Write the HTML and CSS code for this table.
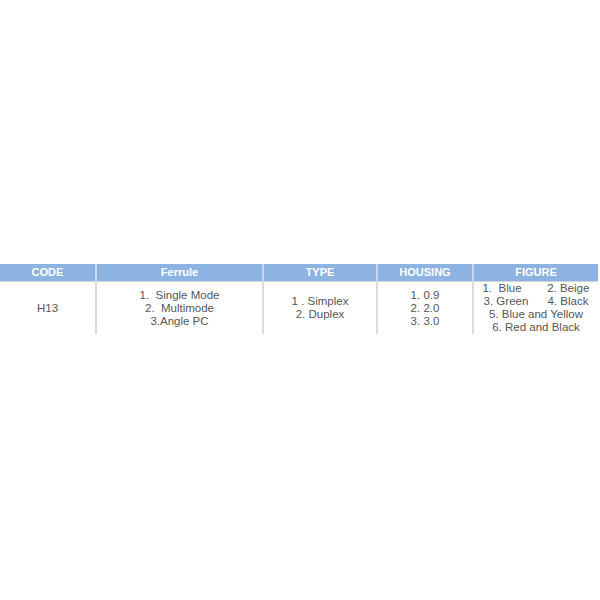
FILE: index.html
```
<!DOCTYPE html>
<html>
<head>
<meta charset="utf-8">
<link rel="stylesheet" href="styles.css">
</head>
<body>
<div class="page">
<table class="spec">
  <colgroup>
    <col class="c1"><col class="c2"><col class="c3"><col class="c4"><col class="c5">
  </colgroup>
  <thead>
    <tr><th>CODE</th><th>Ferrule</th><th>TYPE</th><th>HOUSING</th><th>FIGURE</th></tr>
  </thead>
  <tbody>
    <tr>
      <td>H13</td>
      <td><div class="l">1.  Single Mode</div><div class="l">2.  Multimode</div><div class="l">3.Angle PC</div></td>
      <td><div class="l">1 . Simplex</div><div class="l">2. Duplex</div></td>
      <td><div class="l">1. 0.9</div><div class="l">2. 2.0</div><div class="l">3. 3.0</div></td>
      <td><div class="l">1.  Blue        2. Beige</div><div class="l">3. Green      4. Black</div><div class="l">5. Blue and Yellow</div><div class="l">6. Red and Black</div></td>
    </tr>
  </tbody>
</table>
</div>
</body>
</html>
```
FILE: styles.css
```
html, body { margin: 0; padding: 0; background: #fff; }
.page { padding-top: 264px; width: 598px; }
.spec {
  width: 598px;
  border-collapse: collapse;
  table-layout: fixed;
  font-family: "Liberation Sans", Arial, sans-serif;
}
.c1 { width: 96px; }
.c2 { width: 167px; }
.c3 { width: 114px; }
.c4 { width: 96px; }
.c5 { width: 125px; }
.spec th {
  background: #8db3e2;
  color: #fff;
  font-weight: bold;
  font-size: 11px;
  height: 17px;
  padding: 0;
  line-height: 17px;
  border-left: 2px solid #c9d8ec;
  border-bottom: 1px solid #d4d4d4;
}
.spec th:first-child { border-left: none; }
.spec td {
  color: #555;
  font-size: 11.5px;
  text-align: center;
  vertical-align: middle;
  height: 52px;
  padding: 0;
  line-height: 13px;
  border-left: 2px solid #dcdcdc;
}
.spec td:first-child { border-left: none; }
.l { white-space: pre; }
```
